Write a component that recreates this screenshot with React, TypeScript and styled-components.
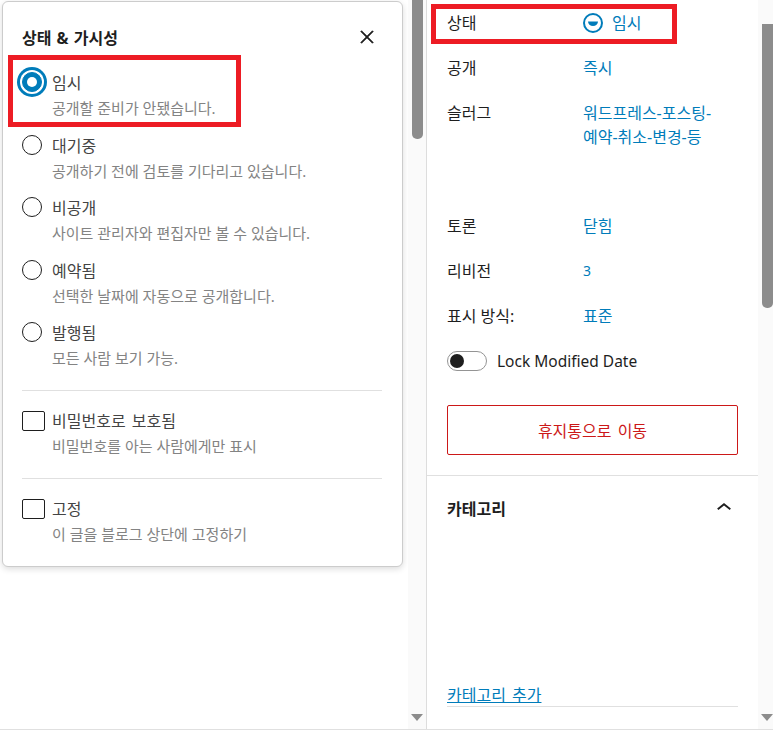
import styled, { createGlobalStyle } from 'styled-components';

const GlobalStyle = createGlobalStyle`
  html, body {
    margin: 0;
    padding: 0;
    background: #fff;
  }
  body {
    font-family: "Noto Sans", "Noto Sans CJK KR", sans-serif;
    color: #1e1e1e;
  }
`;

const Page = styled.div`
  position: relative;
  width: 773px;
  height: 740px;
  overflow: hidden;
  background: #fff;
`;

const Frame = styled.div`
  display: flex;
  width: 791px;
  height: 730px;
  border-bottom: 1px solid #e0e0e0;
  box-sizing: border-box;
`;

const EditorPane = styled.div`
  width: 408px;
  flex: none;
  box-sizing: border-box;
  padding: 1px 0 0 2px;
`;

const Popover = styled.div`
  width: 401px;
  box-sizing: border-box;
  background: #fff;
  border: 1px solid #ccc;
  border-radius: 6px;
  padding: 23px 20px 18px 19px;
  box-shadow: 0 2px 6px rgba(0, 0, 0, 0.14);
`;

const PopoverHeader = styled.div`
  display: flex;
  justify-content: space-between;
  align-items: center;
  height: 24px;
  margin-bottom: 21px;
`;

const PopoverTitle = styled.h2`
  margin: 0;
  padding-top: 2px;
  font-size: 16px;
  font-weight: 700;
  line-height: 22px;
  word-spacing: 1px;
`;

const CloseIcon = styled.svg`
  width: 20px;
  height: 20px;
  margin-right: 5px;
  fill: #1e1e1e;
  stroke: #1e1e1e;
  stroke-width: 0.8;
`;

const Option = styled.div`
  display: flex;
  height: ${({ $height }) => $height}px;
`;

const ControlCell = styled.div`
  width: 30px;
  flex: none;
  padding-top: ${({ $top }) => $top}px;
  box-sizing: border-box;
`;

const Radio = styled.span`
  display: block;
  box-sizing: border-box;
  width: 20px;
  height: 20px;
  border-radius: 50%;
  border: 1px solid ${({ $checked }) => ($checked ? '#007cba' : '#1e1e1e')};
  background: ${({ $checked }) => ($checked ? '#007cba' : '#fff')};
  position: relative;
  ${({ $checked }) => $checked && `
    box-shadow: 0 0 0 2px #fff, 0 0 0 5px #007cba;
    &::after {
      content: '';
      position: absolute;
      left: 4px;
      top: 4px;
      width: 10px;
      height: 10px;
      border-radius: 50%;
      background: #fff;
    }
  `}
`;

const Checkbox = styled.span`
  display: block;
  box-sizing: border-box;
  width: 23px;
  height: 20px;
  border: 1px solid #1e1e1e;
  border-radius: 2px;
  background: #fff;
`;

const OptionLabel = styled.div`
  padding-top: 1px;
  font-size: 16px;
  line-height: 25px;
  word-spacing: 2px;
  color: #444;
`;

const OptionHelp = styled.div`
  font-size: 15px;
  line-height: 24px;
  color: #838383;
`;

const Divider = styled.hr`
  border: none;
  height: 1px;
  background: #e0e0e0;
  margin: ${({ $top }) => $top}px 0 17px;
`;

const ScrollTrack = styled.div`
  width: 18px;
  flex: none;
  box-sizing: border-box;
  background: #fafafa;
  display: flex;
  flex-direction: column;
  align-items: center;
  padding-bottom: 8px;
`;

const ScrollThumb = styled.div`
  width: 11px;
  height: ${({ $height }) => $height}px;
  margin-top: ${({ $top }) => $top}px;
  background: #8c8c8c;
  border-radius: 0 0 5px 5px;
`;

const ScrollArrow = styled.div`
  margin-top: auto;
  width: 0;
  height: 0;
  border-left: 6.5px solid transparent;
  border-right: 6.5px solid transparent;
  border-top: 7px solid #8c8c8c;
`;

const Sidebar = styled.aside`
  width: 332px;
  flex: none;
  box-sizing: border-box;
  border-left: 1px solid #ddd;
  display: flex;
  flex-direction: column;
`;

const MetaSection = styled.div`
  padding: 0 20px 20px;
  border-bottom: 1px solid #e0e0e0;
`;

const MetaRow = styled.div`
  display: flex;
  align-items: ${({ $tall }) => ($tall ? 'flex-start' : 'center')};
  height: ${({ $tall }) => ($tall ? 113 : 45)}px;
  padding-top: ${({ $tall }) => ($tall ? 11 : 2)}px;
  box-sizing: border-box;
  font-size: 16px;
`;

const MetaLabel = styled.div`
  width: 136px;
  flex: none;
  color: #1e1e1e;
  line-height: 25px;
`;

const MetaValue = styled.div`
  display: flex;
  align-items: center;
  gap: 9px;
  width: 140px;
  padding-bottom: 2px;
  color: #007cba;
  line-height: 24px;
  word-break: keep-all;
  font-size: ${({ $small }) => ($small ? 14 : 16)}px;
`;

const StatusIcon = styled.svg`
  width: 20px;
  height: 20px;
  flex: none;
  fill: #007cba;
`;

const ToggleRow = styled.div`
  display: flex;
  align-items: center;
  gap: 10px;
  height: 45px;
  font-size: 15.5px;
`;

const ToggleTrack = styled.span`
  display: block;
  box-sizing: border-box;
  width: 40px;
  height: 20px;
  padding: 2px;
  border: 1px solid #949494;
  border-radius: 10px;
  background: #fff;
`;

const ToggleKnob = styled.span`
  display: block;
  width: 14px;
  height: 14px;
  border-radius: 50%;
  background: #1e1e1e;
`;

const TrashButton = styled.button`
  display: block;
  width: 291px;
  height: 50px;
  margin-top: 22px;
  box-sizing: border-box;
  background: #fff;
  border: 1px solid #cc1818;
  border-radius: 2px;
  color: #cc1818;
  font: inherit;
  font-size: 16px;
  word-spacing: 2px;
`;

const CategorySection = styled.section`
  flex: 1;
  display: flex;
  flex-direction: column;
  padding: 0 20px 22px;
`;

const CategoryHeader = styled.div`
  display: flex;
  justify-content: space-between;
  align-items: center;
  height: 64px;
`;

const CategoryTitle = styled.h2`
  margin: 0;
  font-size: 16px;
  font-weight: 700;
`;

const ChevronIcon = styled.svg`
  width: 30px;
  height: 30px;
  margin-right: -1px;
  fill: #1e1e1e;
`;

const AddLink = styled.a`
  margin-top: auto;
  align-self: flex-start;
  font-size: 16px;
  line-height: 22px;
  word-spacing: 2px;
  color: #007cba;
  text-decoration: underline;
`;

const CategoryRule = styled.div`
  height: 1px;
  width: 291px;
  background: #e0e0e0;
`;

const Highlight = styled.div`
  position: absolute;
  box-sizing: border-box;
  left: ${({ $left }) => $left}px;
  top: ${({ $top }) => $top}px;
  width: ${({ $width }) => $width}px;
  height: ${({ $height }) => $height}px;
  border: 5px solid #ed1c24;
  pointer-events: none;
`;

const statuses = [
  { label: '임시', help: '공개할 준비가 안됐습니다.', checked: true },
  { label: '대기중', help: '공개하기 전에 검토를 기다리고 있습니다.' },
  { label: '비공개', help: '사이트 관리자와 편집자만 볼 수 있습니다.' },
  { label: '예약됨', help: '선택한 날짜에 자동으로 공개합니다.' },
  { label: '발행됨', help: '모든 사람 보기 가능.' },
];

const App = () => {
  return (
    <>
      <GlobalStyle />
      <Page>
        <Frame>
          <EditorPane>
            <Popover>
              <PopoverHeader>
                <PopoverTitle>상태 &amp; 가시성</PopoverTitle>
                <CloseIcon viewBox="0 0 24 24">
                  <path d="m13.06 12 6.47-6.47-1.06-1.06L12 10.94 5.53 4.47 4.47 5.53 10.94 12l-6.47 6.47 1.06 1.06L12 13.06l6.47 6.47 1.06-1.06L13.06 12Z" />
                </CloseIcon>
              </PopoverHeader>
              {statuses.map((status) => (
                <Option key={status.label} $height={62.5}>
                  <ControlCell $top={2}>
                    <Radio $checked={status.checked} />
                  </ControlCell>
                  <div>
                    <OptionLabel>{status.label}</OptionLabel>
                    <OptionHelp>{status.help}</OptionHelp>
                  </div>
                </Option>
              ))}
              <Divider $top={7.5} />
              <Option $height={70}>
                <ControlCell $top={3}>
                  <Checkbox />
                </ControlCell>
                <div>
                  <OptionLabel>비밀번호로 보호됨</OptionLabel>
                  <OptionHelp>비밀번호를 아는 사람에게만 표시</OptionHelp>
                </div>
              </Option>
              <Divider $top={0} />
              <Option $height={52}>
                <ControlCell $top={3}>
                  <Checkbox />
                </ControlCell>
                <div>
                  <OptionLabel>고정</OptionLabel>
                  <OptionHelp>이 글을 블로그 상단에 고정하기</OptionHelp>
                </div>
              </Option>
            </Popover>
          </EditorPane>
          <ScrollTrack>
            <ScrollThumb $top={0} $height={139} />
            <ScrollArrow />
          </ScrollTrack>
          <Sidebar>
            <MetaSection>
              <MetaRow>
                <MetaLabel>상태</MetaLabel>
                <MetaValue>
                  <StatusIcon viewBox="0 0 20 20">
                    <path d="M10 0a10 10 0 1 0 0 20 10 10 0 0 0 0-20Zm0 2a8 8 0 1 1 0 16 8 8 0 0 1 0-16Z" />
                    <path d="M5 8.5h10a5 4.5 0 0 1-10 0Z" />
                  </StatusIcon>
                  임시
                </MetaValue>
              </MetaRow>
              <MetaRow>
                <MetaLabel>공개</MetaLabel>
                <MetaValue>즉시</MetaValue>
              </MetaRow>
              <MetaRow $tall>
                <MetaLabel>슬러그</MetaLabel>
                <MetaValue>워드프레스-포스팅-예약-취소-변경-등</MetaValue>
              </MetaRow>
              <MetaRow>
                <MetaLabel>토론</MetaLabel>
                <MetaValue>닫힘</MetaValue>
              </MetaRow>
              <MetaRow>
                <MetaLabel>리비전</MetaLabel>
                <MetaValue $small>3</MetaValue>
              </MetaRow>
              <MetaRow>
                <MetaLabel>표시 방식:</MetaLabel>
                <MetaValue>표준</MetaValue>
              </MetaRow>
              <ToggleRow>
                <ToggleTrack>
                  <ToggleKnob />
                </ToggleTrack>
                Lock Modified Date
              </ToggleRow>
              <TrashButton>휴지통으로 이동</TrashButton>
            </MetaSection>
            <CategorySection>
              <CategoryHeader>
                <CategoryTitle>카테고리</CategoryTitle>
                <ChevronIcon viewBox="0 0 24 24">
                  <path d="M6.5 12.4 12 8l5.5 4.4-.9 1.2L12 10l-4.5 3.6-1-1.2z" />
                </ChevronIcon>
              </CategoryHeader>
              <AddLink href="#">카테고리 추가</AddLink>
              <CategoryRule />
            </CategorySection>
          </Sidebar>
          <ScrollTrack>
            <ScrollThumb $top={24} $height={284} />
            <ScrollArrow />
          </ScrollTrack>
        </Frame>
        <Highlight $left={8} $top={55} $width={233} $height={72} />
        <Highlight $left={431} $top={4} $width={246} $height={40} />
      </Page>
    </>
  );
};

export default App;
